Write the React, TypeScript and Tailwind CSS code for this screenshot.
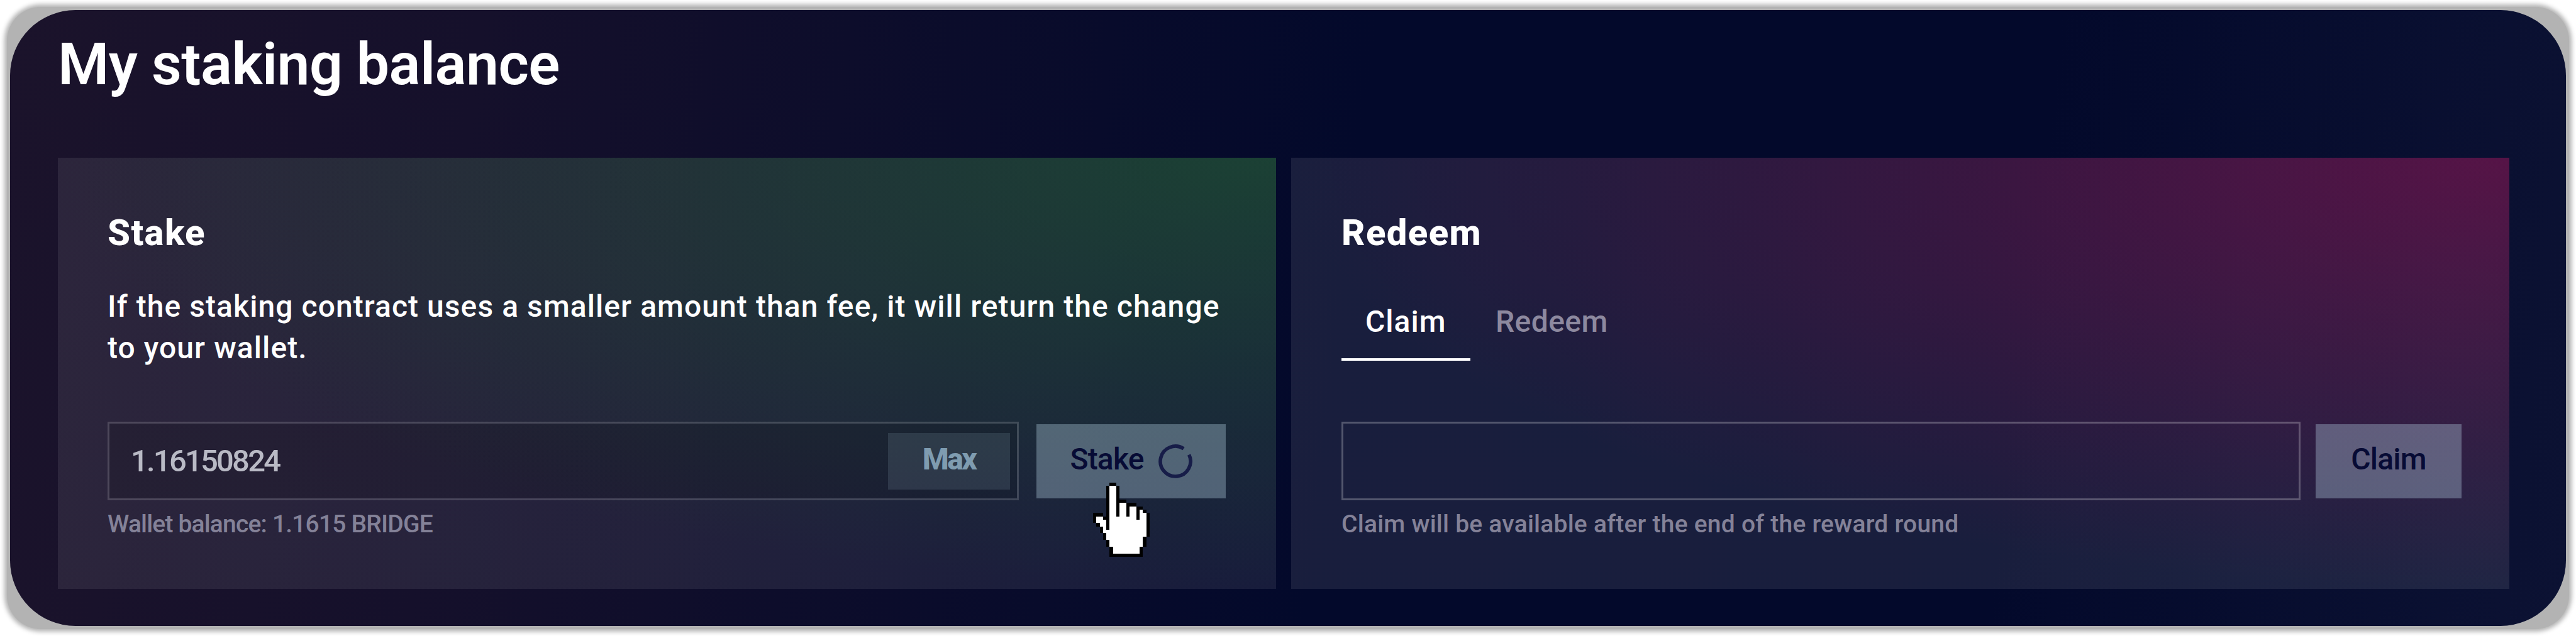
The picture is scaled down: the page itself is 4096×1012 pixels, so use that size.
import type { ReactNode } from "react";

// One character per pixel: # outline, o fill.
const HAND = [
  ".....##..........",
  "....#oo#.........",
  "....#oo#.........",
  "....#oo#.........",
  "....#oo#.........",
  "....#oo###.......",
  "....#oo#oo###....",
  "....#oo#oo#oo##..",
  "....#oo#oo#oo#o#.",
  "###.#oo#oo#oo#oo#",
  "#oo##oooooooo#oo#",
  "#ooo#ooooooooooo#",
  ".#oo#ooooooooooo#",
  "..#o#ooooooooooo#",
  "..#ooooooooooooo#",
  "...#oooooooooooo#",
  "...#ooooooooooo#.",
  "....#oooooooooo#.",
  "....#oooooooooo#.",
  ".....#oooooooo#..",
  ".....#oooooooo#..",
  ".....##########..",
];

function pixels(mark: string) {
  let d = "";
  HAND.forEach((row, y) => {
    for (let x = 0; x < row.length; x++) {
      if (row[x] === mark) d += `M${x} ${y}h1v1h-1z`;
    }
  });
  return d;
}

function HandCursor() {
  return (
    <svg
      className="pointer-events-none absolute left-[90px] top-[93px] h-[118px] w-[90px]"
      viewBox="0 0 17 22"
      preserveAspectRatio="none"
      shapeRendering="crispEdges"
    >
      <path d={pixels("o")} fill="#ffffff" />
      <path d={pixels("#")} fill="#000000" />
    </svg>
  );
}

function Spinner() {
  return (
    <svg className="size-[54px]" viewBox="0 0 54 54" fill="none">
      <path d="M40.1 6.9A24 24 0 1 0 48.6 16.5" stroke="#171d48" strokeWidth="5.6" />
    </svg>
  );
}

function Card({ title, className, children }: { title: string; className: string; children: ReactNode }) {
  return (
    <section className={`h-[686px] w-[1937px] pt-[85px] ${className}`}>
      <h2 className="text-[58px] font-extrabold leading-[68px] tracking-[1.4px]">{title}</h2>
      {children}
    </section>
  );
}

function ActionButton({ className, children }: { className: string; children: ReactNode }) {
  return (
    <button
      className={`relative flex h-[118px] items-center justify-center bg-[rgba(186,215,232,0.35)] text-[48px] font-medium leading-[56px] tracking-[-0.8px] text-[#070b35] ${className}`}
    >
      {children}
    </button>
  );
}

function Hint({ children }: { children: ReactNode }) {
  return <p className="mt-[13px] text-[39px] font-medium leading-[50px] text-[#848298]">{children}</p>;
}

export default function App() {
  return (
    <div className="h-[1012px] w-[4096px] overflow-hidden bg-white p-[11px] font-['Roboto',sans-serif] text-white">
      <div className="h-[990px] rounded-[54px] bg-[#b3b3b3] p-[5px] shadow-[0_0_7px_4px_#b3b3b3]">
        <main className="h-[980px] overflow-hidden rounded-[104px] bg-[#03092b] bg-[linear-gradient(97deg,#1b132b_0%,#15102b_18%,#0d0d2b_32%,#03092b_52%,#03092b_78%,#0c1233_100%)] pl-[76px] pt-[31px]">
          <h1 className="text-[93px] font-semibold leading-[112px] tracking-[-0.55px]">My staking balance</h1>

          <div className="mt-[92px] flex gap-[24px]">
            <Card
              title="Stake"
              className="bg-[radial-gradient(ellipse_100%_100%_at_100%_0%,rgba(30,104,44,0.48)_0%,rgba(30,104,44,0)_100%),linear-gradient(rgba(255,255,255,0.08),rgba(255,255,255,0.08))] pl-[79px] pr-[80px]"
            >
              <p className="mt-[51px] whitespace-nowrap text-[48px] font-medium leading-[66px] tracking-[1.07px]">
                If the staking contract uses a smaller amount than fee, it will return the change
                <br />
                to your wallet.
              </p>
              <div className="mt-[84px] flex items-center gap-[28px]">
                <div className="flex h-[125px] flex-1 items-center justify-between border-[3px] border-white/[0.16] bg-black/[0.12] bg-clip-padding pl-[34px] pr-[11px]">
                  <span className="text-[49px] font-medium leading-[56px] tracking-[-2.8px] text-[#b9bac5]">1.16150824</span>
                  <button className="flex h-[90px] w-[194px] items-center justify-center bg-[rgba(186,215,232,0.13)] pb-[5px] text-[48px] font-extrabold leading-[56px] tracking-[-2.6px] text-[#7f9cb0]">
                    Max
                  </button>
                </div>
                <ActionButton className="w-[301px] gap-[23px]">
                  <span className="pb-[5px]">Stake</span>
                  <Spinner />
                  <HandCursor />
                </ActionButton>
              </div>
              <Hint>
                <span className="tracking-[-0.82px]">Wallet balance: 1.1615 BRIDGE</span>
              </Hint>
            </Card>

            <Card
              title="Redeem"
              className="bg-[radial-gradient(ellipse_100%_100%_at_100%_0%,rgba(140,3,74,0.5)_0%,rgba(140,3,74,0)_100%),linear-gradient(rgba(255,255,255,0.085),rgba(255,255,255,0.085))] pl-[80px] pr-[76px]"
            >
              <div className="mt-[80px] flex text-[48px] font-medium leading-[56px]">
                <span className="w-[205px] border-b-[4px] border-white pb-[30px] pl-[38px] tracking-[1px]">Claim</span>
                <span className="pl-[40px] tracking-[0.4px] text-[#8d899f]">Redeem</span>
              </div>
              <div className="mt-[97px] flex items-center gap-[24px]">
                <div className="h-[125px] flex-1 border-[3px] border-white/25 bg-clip-padding" />
                <ActionButton className="w-[232px]">
                  <span className="pb-[5px]">Claim</span>
                </ActionButton>
              </div>
              <Hint>
                <span className="tracking-[0.24px]">Claim will be available after the end of the reward round</span>
              </Hint>
            </Card>
          </div>
        </main>
      </div>
    </div>
  );
}
